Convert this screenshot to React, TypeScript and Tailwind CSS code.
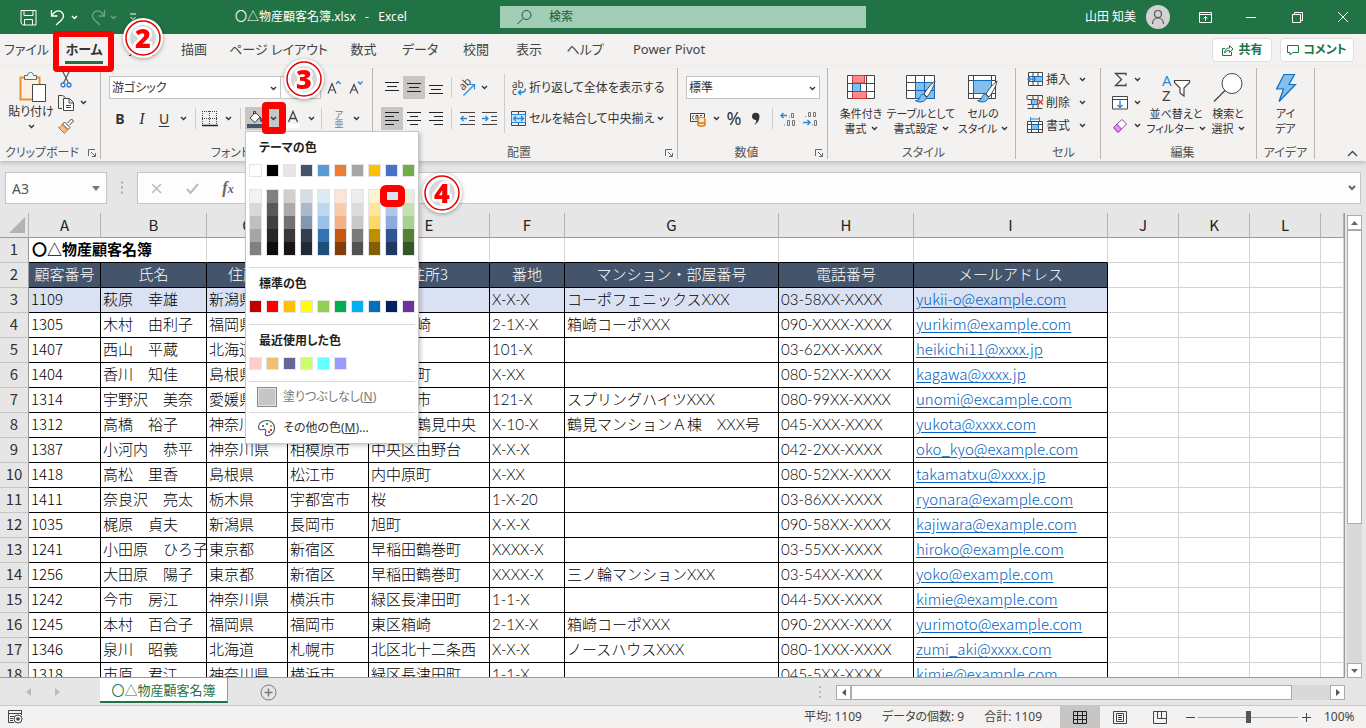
import type { ReactNode } from "react";
import clsx from "clsx";

const UI_FONT = "font-['Noto_Sans','Noto_Sans_CJK_JP',sans-serif] [font-feature-settings:'palt']";
const CELL_FONT = "font-['Noto_Sans_CJK_JP',sans-serif] [font-feature-settings:normal]";
const CODE_FONT = "font-['Lato','Noto_Sans_CJK_JP',sans-serif]";

const tabs = [
  { label: "ファイル", width: "w-[53px]" },
  { label: "ホーム", width: "w-[62px]", active: true },
  { label: "挿入", width: "w-[52px]" },
  { label: "描画", width: "w-[54px]" },
  { label: "ページ レイアウト", width: "w-[115px]" },
  { label: "数式", width: "w-[55px]" },
  { label: "データ", width: "w-[58px]" },
  { label: "校閲", width: "w-[54px]" },
  { label: "表示", width: "w-[52px]" },
  { label: "ヘルプ", width: "w-[60px]" },
  { label: "Power Pivot", width: "w-[108px]" },
];

const columns = [
  { name: "A", width: "w-[72px]", title: "顧客番号" },
  { name: "B", width: "w-[106px]", title: "氏名" },
  { name: "C", width: "w-[81px]", title: "住所1" },
  { name: "D", width: "w-[81px]", title: "住所2" },
  { name: "E", width: "w-[121px]", title: "住所3" },
  { name: "F", width: "w-[75px]", title: "番地", font: CODE_FONT },
  { name: "G", width: "w-[214px]", title: "マンション・部屋番号", font: CODE_FONT },
  { name: "H", width: "w-[135px]", title: "電話番号", font: CODE_FONT },
  { name: "I", width: "w-[194px]", title: "メールアドレス" },
];

const emptyColumns = ["J", "K", "L", ""];

const customers = [
  ["1109", "萩原　幸雄", "新潟県", "長岡市", "旭町", "X-X-X", "コーポフェニックスXXX", "03-58XX-XXXX", "yukii-o@example.com"],
  ["1305", "木村　由利子", "福岡県", "福岡市", "東区箱崎", "2-1X-X", "箱崎コーポXXX", "090-XXXX-XXXX", "yurikim@example.com"],
  ["1407", "西山　平蔵", "北海道", "札幌市", "北区", "101-X", "", "03-62XX-XXXX", "heikichi11@xxxx.jp"],
  ["1404", "香川　知佳", "島根県", "松江市", "内中原町", "X-XX", "", "080-52XX-XXXX", "kagawa@xxxx.jp"],
  ["1314", "宇野沢　美奈", "愛媛県", "松山市", "道後北市", "121-X", "スプリングハイツXXX", "080-99XX-XXXX", "unomi@excample.com"],
  ["1312", "高橋　裕子", "神奈川県", "横浜市", "鶴見区鶴見中央", "X-10-X", "鶴見マンションＡ棟　XXX号", "045-XXX-XXXX", "yukota@xxxx.com"],
  ["1387", "小河内　恭平", "神奈川県", "相模原市", "中央区由野台", "X-X-X", "", "042-2XX-XXXX", "oko_kyo@example.com"],
  ["1418", "高松　里香", "島根県", "松江市", "内中原町", "X-XX", "", "080-52XX-XXXX", "takamatxu@xxxx.jp"],
  ["1411", "奈良沢　亮太", "栃木県", "宇都宮市", "桜", "1-X-20", "", "03-86XX-XXXX", "ryonara@example.com"],
  ["1035", "梶原　貞夫", "新潟県", "長岡市", "旭町", "X-X-X", "", "090-58XX-XXXX", "kajiwara@example.com"],
  ["1241", "小田原　ひろ子", "東京都", "新宿区", "早稲田鶴巻町", "XXXX-X", "", "03-55XX-XXXX", "hiroko@example.com"],
  ["1256", "大田原　陽子", "東京都", "新宿区", "早稲田鶴巻町", "XXXX-X", "三ノ輪マンションXXX", "03-54XX-XXXX", "yoko@example.com"],
  ["1242", "今市　房江", "神奈川県", "横浜市", "緑区長津田町", "1-1-X", "", "044-5XX-XXXX", "kimie@example.com"],
  ["1245", "本村　百合子", "福岡県", "福岡市", "東区箱崎", "2-1X-X", "箱崎コーポXXX", "090-2XXX-XXXX", "yurimoto@example.com"],
  ["1346", "泉川　昭義", "北海道", "札幌市", "北区北十二条西", "X-X-X", "ノースハウスXXX", "080-1XXX-XXXX", "zumi_aki@xxxx.com"],
  ["1318", "市原　君江", "神奈川県", "横浜市", "緑区長津田町", "1-1-X", "", "045-5XX-XXXX", "kimie@example.com"],
];

const themeColors = [
  ["#ffffff", "#f2f2f2", "#d9d9d9", "#bfbfbf", "#a6a6a6", "#808080"],
  ["#000000", "#808080", "#595959", "#404040", "#262626", "#0d0d0d"],
  ["#e7e6e6", "#d0cece", "#aeaaaa", "#757171", "#3a3838", "#161616"],
  ["#44546a", "#d6dce4", "#acb9ca", "#8497b0", "#333f4f", "#222b35"],
  ["#5b9bd5", "#ddebf7", "#bdd7ee", "#9bc2e6", "#2f75b5", "#1f4e78"],
  ["#ed7d31", "#fce4d6", "#f8cbad", "#f4b084", "#c65911", "#833c0c"],
  ["#a5a5a5", "#ededed", "#dbdbdb", "#c9c9c9", "#7b7b7b", "#525252"],
  ["#ffc000", "#fff2cc", "#ffe699", "#ffd966", "#bf8f00", "#806000"],
  ["#4472c4", "#d9e1f2", "#b4c6e7", "#8ea9db", "#305496", "#203764"],
  ["#70ad47", "#e2efda", "#c6e0b4", "#a9d08e", "#548235", "#375623"],
];
const standardColors = ["#c00000", "#ff0000", "#ffc000", "#ffff00", "#92d050", "#00b050", "#00b0f0", "#0070c0", "#002060", "#7030a0"];
const recentColors = ["#ffcccc", "#f0c070", "#666699", "#ccff66", "#66ffff", "#9999ff"];

type IconProps = { w?: number; h?: number; className?: string; children: ReactNode };

function Icon({ w = 16, h = 16, className, children }: IconProps) {
  return (
    <svg width={w} height={h} viewBox={`0 0 ${w} ${h}`} fill="none" stroke="#444" className={clsx("shrink-0 overflow-visible", className)} aria-hidden="true">
      {children}
    </svg>
  );
}

function Chevron({ className }: { className?: string }) {
  return (
    <Icon w={7} h={5} className={className}>
      <path d="M1 1l2.500 2.500L6 1" stroke="currentColor" strokeWidth="1.400" />
    </Icon>
  );
}

function Drop({ label, className }: { label: string; className?: string }) {
  return (
    <button type="button" aria-label={label} className={clsx("flex h-[23px] shrink-0 items-center justify-center", className ?? "w-4")}>
      <Chevron />
    </button>
  );
}

function Tool({ label, className, children }: { label: string; className?: string; children: ReactNode }) {
  return (
    <button type="button" aria-label={label} className={clsx("flex h-[23px] shrink-0 items-center justify-center", className ?? "w-[22px]")}>
      {children}
    </button>
  );
}

function Separator({ className }: { className?: string }) {
  return <div className={clsx("mx-1 w-px bg-[#d0cecc]", className ?? "h-[21px]")} />;
}

function Group({ label, launcher, className, children }: { label: string; launcher?: boolean; className: string; children: ReactNode }) {
  return (
    <section aria-label={label} className={clsx("relative my-0.5 flex shrink-0 flex-col border-r border-[#b9b7b5]", className)}>
      <div className="flex-1">{children}</div>
      <div className={clsx("text-center text-[12px] leading-3 whitespace-nowrap text-[#555]", launcher && "pr-5")}>{label}</div>
      {launcher && (
        <button type="button" aria-label={`${label}の設定`} className="absolute right-1 bottom-0.5">
          <Icon w={8} h={8}>
            <path d="M.5 7V.5H7M3 3l4 4M7.500 4v3.500H4" stroke="#666" />
          </Icon>
        </button>
      )}
    </section>
  );
}

function BigButton({ icon, lines, drop, className }: { icon: ReactNode; lines: string[]; drop?: boolean; className: string }) {
  return (
    <button type="button" className={clsx("flex shrink-0 flex-col items-center text-[11px] leading-[15px] whitespace-nowrap", className)}>
      <span className="flex h-[36px] items-center">{icon}</span>
      <span>{lines[0]}</span>
      <span className="flex items-center gap-1">
        {lines[1]}
        {drop && <Chevron />}
      </span>
    </button>
  );
}

function Lines({ rows }: { rows: [number, number, number][] }) {
  return (
    <Icon w={14} h={14}>
      {rows.map(([x1, x2, y]) => (
        <path key={y} d={`M${x1} ${y}.500H${x2}`} stroke="#222" />
      ))}
    </Icon>
  );
}

function TitleBar() {
  return (
    <header className="grid h-[34px] shrink-0 grid-cols-[500fr_366fr_500fr] items-center bg-[#217346] text-[12px] text-white">
      <div className="flex items-center">
        <button type="button" aria-label="上書き保存" className="ml-5">
          <Icon w={17} h={17}>
            <path d="M1 1.500h15v14.500H3L1 14zM4 1.500v5h9v-5M4.500 16v-5.500h8V16" stroke="#fff" />
          </Icon>
        </button>
        <button type="button" aria-label="元に戻す" className="ml-3">
          <Icon w={17} h={18}>
            <path d="M2.500 2v6h6M3 7.500C5 3.500 9 1.500 12.500 4c3 3 2.500 5.500 0 8L7 17" stroke="#fff" strokeWidth="1.300" />
          </Icon>
        </button>
        <Drop label="元に戻す履歴" />
        <button type="button" aria-label="やり直し" className="ml-2 opacity-35">
          <Icon w={17} h={18}>
            <path d="M14.500 2v6h-6M14 7.500C12 3.500 8 1.500 4.500 4c-3 3-2.500 5.500 0 8L10 17" stroke="#fff" strokeWidth="1.300" />
          </Icon>
        </button>
        <Drop label="やり直し履歴" className="w-3 opacity-35" />
        <button type="button" aria-label="クイック アクセス ツール バーのカスタマイズ" className="ml-2.5">
          <Icon w={8} h={8}>
            <path d="M1 1h6M1.500 4L4 6.500 6.500 4" stroke="#fff" />
          </Icon>
        </button>
        <h1 className="ml-[98px] whitespace-nowrap">〇△物産顧客名簿.xlsx&nbsp;&nbsp; -&nbsp;&nbsp; Excel</h1>
      </div>
      <label className="flex h-[22px] items-center bg-[#a0cdb4] pl-4 text-[#185c37]">
        <Icon w={17} h={17}>
          <circle cx="10.500" cy="6" r="4.500" stroke="#185c37" />
          <path d="M7 9.500L1.500 15" stroke="#185c37" />
        </Icon>
        <input aria-label="検索" placeholder="検索" className="ml-4 min-w-0 flex-1 bg-transparent outline-none placeholder:text-[#185c37]" />
      </label>
      <div className="flex items-center justify-end">
        <span>山田 知美</span>
        <span className="mr-3 ml-2.5 flex h-6 w-6 items-center justify-center rounded-full bg-[#d2d2d2]">
          <Icon w={14} h={16}>
            <circle cx="7" cy="5" r="3.500" stroke="#555" strokeWidth="1.200" />
            <path d="M1.500 15c0-8 11-8 11 0" stroke="#555" strokeWidth="1.200" />
          </Icon>
        </span>
        <button type="button" aria-label="リボンの表示オプション" className="flex w-[46px] justify-center">
          <Icon w={13} h={11}>
            <path d="M.5.500h12v10H.500zM.5 2.500h12M6.500 9V4.500M4.500 6.500l2-2 2 2" stroke="#fff" />
          </Icon>
        </button>
        <button type="button" aria-label="最小化" className="flex w-[46px] justify-center">
          <Icon w={10} h={10}>
            <path d="M0 5.500h10" stroke="#fff" />
          </Icon>
        </button>
        <button type="button" aria-label="元に戻す (縮小)" className="flex w-[46px] justify-center">
          <Icon w={11} h={11}>
            <path d="M.5 2.500h8v8h-8zM2.500 2.500v-2h8v8h-2" stroke="#fff" />
          </Icon>
        </button>
        <button type="button" aria-label="閉じる" className="flex w-[46px] justify-center">
          <Icon w={10} h={10}>
            <path d="M0 0l10 10M10 0L0 10" stroke="#fff" />
          </Icon>
        </button>
      </div>
    </header>
  );
}

function TabBar() {
  return (
    <nav className="flex h-8 shrink-0 items-center bg-[#f3f2f1] text-[13px] text-[#444]">
      {tabs.map(({ label, width, active }) => (
        <button key={label} type="button" className={clsx("flex h-7 shrink-0 items-center justify-center whitespace-nowrap", width)}>
          <span className={clsx("border-b-[3px] leading-6", active ? "border-[#217346] font-bold text-[#333]" : "border-transparent")}>{label}</span>
        </button>
      ))}
      <div className="ml-auto flex gap-2 pr-3 text-[12px] font-bold text-[#217346]">
        <button type="button" className="flex h-6 w-[60px] items-center justify-center gap-1 rounded-sm border border-[#e1dfdd] bg-white">
          <Icon w={13} h={13}>
            <path d="M4 4.500H1.500v7h9V8M3.500 9c.5-3.500 2-5 5-5V1.500l3.500 3.500-3.500 3.500V6.500c-2 0-3.500.5-5 2.500z" stroke="#217346" />
          </Icon>
          共有
        </button>
        <button type="button" className="flex h-6 w-[74px] items-center justify-center gap-1 rounded-sm border border-[#e1dfdd] bg-white">
          <Icon w={12} h={12}>
            <path d="M.5 1.500h11v7H6l-3 2.500V8.500H.500z" stroke="#217346" />
          </Icon>
          コメント
        </button>
      </div>
    </nav>
  );
}

function ClipboardGroup() {
  return (
    <Group label="クリップボード" launcher className="w-[101px] pl-1">
      <div className="flex">
        <button type="button" className="flex w-[54px] shrink-0 flex-col items-center pt-1 text-[12px] whitespace-nowrap">
          <Icon w={28} h={32} className="ml-1">
            <path d="M1.500 5.500h19v22h-19z" fill="#fdf1e2" stroke="#e8932f" strokeWidth="2" />
            <path d="M5.500 7.500v-4h3c0-4 6-4 6 0h3v4z" fill="#f3f2f1" stroke="#666" />
            <path d="M13.500 12.500h13v17h-13z" fill="#fff" stroke="#444" />
          </Icon>
          <span className="leading-4">貼り付け</span>
          <Chevron className="mt-1" />
        </button>
        <div className="flex flex-col">
          <Tool label="切り取り" className="w-4">
            <Icon w={14} h={17}>
              <path d="M3.500 0l6 12M10.500 0l-6 12" stroke="#555" strokeWidth="1.200" />
              <circle cx="4" cy="14" r="2" stroke="#2b7cd3" strokeWidth="1.300" />
              <circle cx="10" cy="14" r="2" stroke="#2b7cd3" strokeWidth="1.300" />
            </Icon>
          </Tool>
          <div className="flex">
            <Tool label="コピー" className="w-4">
              <Icon w={16} h={16}>
                <path d="M4 13.500H.500v-13h4l3 2" />
                <path d="M5.500 3.500h6l4 4v8h-10zM11 3.500V8h4.500M8 10.500h5M8 12.500h5" fill="#fff" />
              </Icon>
            </Tool>
            <Drop label="コピーのオプション" className="w-[18px]" />
          </div>
          <Tool label="書式のコピー/貼り付け" className="w-4">
            <Icon w={16} h={16}>
              <path d="M9.500 5l4-4 2 2-4 4" fill="#fff" />
              <path d="M6.500 4l5.500 5.500-2 2L4.500 6z" fill="#fff" />
              <path d="M4 6.500l5.500 5.500-3 3.500L.5 9.500C2 9 3.500 8 4 6.500z" fill="#f5c183" stroke="#d9730d" />
            </Icon>
          </Tool>
        </div>
      </div>
    </Group>
  );
}

function FontGroup() {
  return (
    <Group label="フォント" launcher className="w-[272px] pl-2">
      <div className="flex items-center pt-2">
        <div className="relative flex">
          <select aria-label="フォント名" className="h-[23px] w-[172px] appearance-none border border-[#c6c4c2] bg-white pl-0.5 text-[12px]">
            <option>游ゴシック</option>
          </select>
          <Chevron className="pointer-events-none absolute top-2.5 right-1" />
        </div>
        <div className="relative -ml-px flex">
          <select aria-label="フォント サイズ" className="h-[23px] w-[41px] appearance-none border border-[#c6c4c2] bg-white pl-1 text-[12px]">
            <option>11</option>
          </select>
          <Chevron className="pointer-events-none absolute top-2.5 right-1" />
        </div>
        <Tool label="フォント サイズの拡大" className="ml-0.5 w-[22px]">
          <Icon w={14} h={15}>
            <path d="M1 13.500L5 3.500l4 10M2.500 10h5" strokeWidth="1.200" />
            <path d="M9 4l2.200-2.500L13.500 4" stroke="#2b7cd3" strokeWidth="1.200" />
          </Icon>
        </Tool>
        <Tool label="フォント サイズの縮小">
          <Icon w={14} h={15}>
            <path d="M1 13.500L5 4.500l4 9M2.500 10h5" strokeWidth="1.200" />
            <path d="M9 1.500L11.200 4l2.300-2.500" stroke="#2b7cd3" strokeWidth="1.200" />
          </Icon>
        </Tool>
      </div>
      <div className="flex items-center pt-2 text-[14px]">
        <Tool label="太字">
          <b>B</b>
        </Tool>
        <Tool label="斜体">
          <i className="font-['Liberation_Serif',serif] text-[16px]">I</i>
        </Tool>
        <Tool label="下線">
          <u className="underline-offset-2">U</u>
        </Tool>
        <Drop label="下線の種類" />
        <Separator />
        <Tool label="罫線" className="w-5">
          <Icon w={16} h={16}>
            <path d="M.5 0v14M14.500 0v14M0 .500h15M7.500 0v14M0 7.500h15" strokeDasharray="1 1" />
            <path d="M0 14.500h16" stroke="#222" strokeWidth="1.500" />
          </Icon>
        </Tool>
        <Drop label="罫線の種類" />
        <Separator />
        <Tool label="塗りつぶしの色" className="w-5 bg-[#c8c6c4]">
          <Icon w={18} h={18}>
            <path d="M4 8l5.500-5.500L14 7l-5 5.500z" fill="#fff" stroke="#444" />
            <path d="M7.500 5V1.500h2V4" />
            <path d="M14 7c2 1.500 2 4 1.500 5-1.500-1-1.500-3-1.500-5z" fill="#2b579a" stroke="#2b579a" />
            <path d="M1 14h16v4H1z" fill="#44546a" stroke="none" />
          </Icon>
        </Tool>
        <Drop label="塗りつぶしの色の一覧" className="w-4 bg-[#c8c6c4]" />
        <Tool label="フォントの色" className="w-6">
          <Icon w={16} h={18}>
            <path d="M3.500 12L8 1.500 12.500 12M5 8.500h6" strokeWidth="1.300" />
            <path d="M1 14h14v4H1z" fill="#fff" stroke="none" />
          </Icon>
        </Tool>
        <Drop label="フォントの色の一覧" className="w-3" />
        <Separator />
        <Tool label="ふりがなの表示/非表示" className="w-[26px] flex-col text-[9px] leading-[9px] text-[#777]">
          <span>ア</span>
          <span>亜</span>
        </Tool>
        <Drop label="ふりがなのオプション" className="w-2" />
      </div>
    </Group>
  );
}

function AlignmentGroup() {
  return (
    <Group label="配置" launcher className="w-[305px] pl-2">
      <div className="flex">
        <div className="flex flex-col gap-2 pt-2">
          <div className="flex items-center">
            <Tool label="上揃え">
              <Lines rows={[[0, 14, 1], [2, 12, 5], [0, 14, 9]]} />
            </Tool>
            <Tool label="上下中央揃え" className="w-[22px] bg-[#c8c6c4]">
              <Lines rows={[[0, 14, 2], [2, 12, 6], [0, 14, 10]]} />
            </Tool>
            <Tool label="下揃え">
              <Lines rows={[[0, 14, 4], [2, 12, 8], [0, 14, 12]]} />
            </Tool>
            <Separator />
            <Tool label="方向">
              <Icon w={18} h={18}>
                <path d="M5.500 16.500L16 6M11.500 5.500h5v5" stroke="#2b88d8" strokeWidth="1.200" />
                <text x="5" y="12" fontSize="11" fill="#444" stroke="none" transform="rotate(-45 5 12)">
                  ab
                </text>
              </Icon>
            </Tool>
            <Drop label="方向の一覧" className="w-3" />
          </div>
          <div className="flex items-center">
            <Tool label="左揃え" className="w-[22px] bg-[#c8c6c4]">
              <Lines rows={[[0, 14, 0], [0, 9, 4], [0, 14, 8], [0, 9, 12]]} />
            </Tool>
            <Tool label="中央揃え">
              <Lines rows={[[0, 14, 0], [3, 11, 4], [0, 14, 8], [3, 11, 12]]} />
            </Tool>
            <Tool label="右揃え">
              <Lines rows={[[0, 14, 0], [5, 14, 4], [0, 14, 8], [5, 14, 12]]} />
            </Tool>
            <Separator />
            <Tool label="インデントを減らす">
              <Icon w={15} h={13}>
                <path d="M0 .500h15M9 4.500h6M9 8.500h6M0 12.500h15" />
                <path d="M7 6.500H1M3.500 4L1 6.500 3.500 9" stroke="#2b88d8" strokeWidth="1.300" />
              </Icon>
            </Tool>
            <Tool label="インデントを増やす">
              <Icon w={15} h={13}>
                <path d="M0 .500h15M9 4.500h6M9 8.500h6M0 12.500h15" />
                <path d="M0 6.500h6M3.500 4L6 6.500 3.500 9" stroke="#2b88d8" strokeWidth="1.300" />
              </Icon>
            </Tool>
          </div>
        </div>
        <Separator className="mt-1.5 h-[59px]" />
        <div className="flex flex-col gap-2 pt-2 pl-0.5 text-[12px] whitespace-nowrap">
          <button type="button" className="flex h-[23px] items-center gap-0.5">
            <Icon w={16} h={18}>
              <text x="1" y="9" fontSize="10" fill="#444" stroke="none">ab</text>
              <text x="1" y="16" fontSize="10" fill="#444" stroke="none">c</text>
              <path d="M14.500 9.500c0 4-2 4-7 4M10 11l-2.500 2.500L10 16" stroke="#2b88d8" strokeWidth="1.500" />
            </Icon>
            折り返して全体を表示する
          </button>
          <div className="flex items-center">
            <button type="button" className="flex h-[23px] items-center gap-0.5">
              <Icon w={16} h={16}>
                <path d="M.5.500h14v14H.500zM.5 3.500h14M.500 11.500h14M7.500.500v3M7.500 11.500v3" />
                <path d="M.5 3.500h14v8H.500z" fill="#cfe4f7" stroke="#2b88d8" />
                <path d="M2.500 7.500h10M5 5L2.500 7.500 5 10M10 5l2.500 2.500L10 10" stroke="#2b88d8" strokeWidth="1.300" />
              </Icon>
              セルを結合して中央揃え
            </button>
            <Drop label="セル結合のオプション" className="w-3" />
          </div>
        </div>
      </div>
    </Group>
  );
}

function NumberGroup() {
  return (
    <Group label="数値" launcher className="w-[150px] pl-2">
      <div className="relative mt-2 flex w-[134px]">
        <select aria-label="表示形式" className="h-[23px] w-full appearance-none border border-[#c6c4c2] bg-white pl-0.5 text-[12px]">
          <option>標準</option>
        </select>
        <Chevron className="pointer-events-none absolute top-2.5 right-1" />
      </div>
      <div className="flex items-center pt-2">
        <Tool label="通貨表示形式">
          <Icon w={17} h={16}>
            <path d="M9 10.500H1.500v-8h14v4M5 4.500c-2 0-2 4 0 4M7 8.500v-4h2v4M11 4.500h2M11 6.500h1" />
            <ellipse cx="12.500" cy="8" rx="3.500" ry="1.500" fill="#fff" stroke="#d9730d" />
            <path d="M9 8v6c0 1.500 7 1.500 7 0V8M9 11c0 1.500 7 1.500 7 0" fill="#fbe3c8" stroke="#d9730d" strokeWidth="1.300" />
          </Icon>
        </Tool>
        <Drop label="通貨の一覧" />
        <Tool label="パーセント スタイル" className="w-5 text-[18px]">
          %
        </Tool>
        <Tool label="桁区切りスタイル" className="w-6">
          <Icon w={10} h={14}>
            <path d="M1 4.500a3.500 3.500 0 1 1 7.500 0c0 4-2 7-5.500 8.500C5 11 5.500 9.500 5 8 2.500 8 1 6.500 1 4.500z" fill="#333" stroke="none" />
          </Icon>
        </Tool>
        <Separator />
        <Tool label="小数点以下の表示桁数を増やす">
          <Icon w={16} h={16}>
            <path d="M7 4.500H1M3.500 2L1 4.500 3.500 7" stroke="#2b88d8" strokeWidth="1.400" />
            <path d="M11.500 2.500h2v4h-2zM7.500 9.500h2v5h-2zM12.500 9.500h2v5h-2zM4 14h1M9 6h1" stroke="#777" />
          </Icon>
        </Tool>
        <Tool label="小数点以下の表示桁数を減らす">
          <Icon w={16} h={16}>
            <path d="M1 11.500h7M5.500 9L8 11.500 5.500 14" stroke="#2b88d8" strokeWidth="1.400" />
            <path d="M6.500 1.500h2v4h-2zM11.500 1.500h2v4h-2zM3 5.500h1M12.500 9.500h2v5h-2zM10 14h1" stroke="#777" />
          </Icon>
        </Tool>
      </div>
    </Group>
  );
}

function Brush() {
  return (
    <>
      <path d="M29 8c-3 2-8 8-11 13l3 3c3-4 7-10 8-16z" fill="#fff" stroke="#444" />
      <path d="M17.500 21c-3 0-3 2-4 4.500-.5 1.500-2 2-4 2 3 2.500 10 2 11-3z" fill="#83beec" stroke="#0f6cbd" />
    </>
  );
}

function StyleGroup() {
  return (
    <Group label="スタイル" className="w-[188px] pl-1">
      <div className="flex pt-0.5">
        <BigButton
          className="w-[58px]"
          lines={["条件付き", "書式"]}
          drop
          icon={
            <Icon w={28} h={26}>
              <path d="M.5.500h27v23H.500zM.5 8.500h27M.500 16.500h27M5.500.500v23M19.500.500v23" fill="#fff" />
              <path d="M5.500.500h12v7.500h-12zM5.500 16.500h14v7h-14z" fill="#ff8a8a" stroke="#d13438" />
              <path d="M5.500 8.500h8v8h-8z" fill="#83beec" stroke="#0f6cbd" />
            </Icon>
          }
        />
        <BigButton
          className="w-[62px]"
          lines={["テーブルとして", "書式設定"]}
          drop
          icon={
            <Icon w={30} h={30}>
              <path d="M.5 2.500h28v23H.500zM.5 9.500h28M.500 17.500h28M9.500 2.500v23M18.500 2.500v23" fill="#fff" />
              <path d="M9.500 9.500h19v16h-19zM9.500 17.500h19M18.500 9.500v16" fill="#83beec" stroke="#0f6cbd" />
              <Brush />
            </Icon>
          }
        />
        <BigButton
          className="w-[62px]"
          lines={["セルの", "スタイル"]}
          drop
          icon={
            <Icon w={30} h={30}>
              <path d="M.5 2.500h27v23H.500zM.5 7.500h27M.500 20.500h27M5.500 2.500v23M23.500 2.500v23" fill="#fff" />
              <path d="M5.500 7.500h18v13h-18z" fill="#83beec" stroke="#0f6cbd" />
              <Brush />
            </Icon>
          }
        />
      </div>
    </Group>
  );
}

function CellRow({ label, icon }: { label: string; icon: ReactNode }) {
  return (
    <div className="flex items-center">
      <button type="button" className="flex h-[23px] items-center gap-0.5">
        {icon}
        {label}
      </button>
      <Drop label={`${label}のオプション`} className="ml-1 w-4" />
    </div>
  );
}

function CellsGroup() {
  return (
    <Group label="セル" className="w-[85px] pl-[11px]">
      <div className="text-[12px]">
        <CellRow
          label="挿入"
          icon={
            <Icon w={17} h={15}>
              <path d="M1.500.500h14v13h-14zM1.500 4.500h14M1.500 9.500h14M6 .500v13M11 .500v13" fill="#fff" />
              <path d="M7.500 4.500h8v5h-8z" fill="#83beec" stroke="#0f6cbd" />
              <path d="M9 7H1M4 4L1 7l3 3" stroke="#2b88d8" strokeWidth="1.500" />
            </Icon>
          }
        />
        <CellRow
          label="削除"
          icon={
            <Icon w={17} h={15}>
              <path d="M.5.500h15M.500 13.500h15M.500 4.500h4v5h-4M6 .500v4M11 .500v4M6 9.500v4M11 9.500v4M0 .500v4M15.500.500v3" />
              <path d="M4.500 4.500h6v5h-6z" fill="#83beec" stroke="#0f6cbd" />
              <path d="M11 4.500l5 5M16 4.500l-5 5" stroke="#e03c31" strokeWidth="1.500" />
            </Icon>
          }
        />
        <CellRow
          label="書式"
          icon={
            <Icon w={17} h={17}>
              <path d="M.5 4.500h15v11H.500zM.5 7.500h15M.500 12.500h15M4.500 4.500v11M11.500 4.500v11" fill="#fff" />
              <path d="M4.500 7.500h7v5h-7z" fill="#83beec" stroke="#0f6cbd" />
              <path d="M3.500 0v4M12.500 0v4M4 2h8" stroke="#2b88d8" />
            </Icon>
          }
        />
      </div>
    </Group>
  );
}

function EditingGroup() {
  return (
    <Group label="編集" className="w-[156px] pl-2">
      <div className="flex">
        <div className="flex flex-col">
          <div className="flex items-center">
            <Tool label="オート SUM">
              <Icon w={13} h={15}>
                <path d="M12 3.500v-2H1.500l6 6-6 6H12v-2" strokeWidth="1.300" />
              </Icon>
            </Tool>
            <Drop label="オート SUM の一覧" className="w-3" />
          </div>
          <div className="flex items-center">
            <Tool label="フィル">
              <Icon w={16} h={14}>
                <path d="M.5.500h15v12.500H.500zM.5 3.500h15" fill="#fff" />
                <path d="M8 4.500v7M5.500 9L8 11.500 10.500 9" stroke="#2b88d8" strokeWidth="1.400" />
              </Icon>
            </Tool>
            <Drop label="フィルの一覧" className="w-3" />
          </div>
          <div className="flex items-center">
            <Tool label="クリア">
              <Icon w={16} h={16}>
                <path d="M1.500 9.500L10 1.500l4.500 4.500L6 14.500z" fill="#fff" stroke="#a33fb0" />
                <path d="M1.500 9.500L5 6l4.500 5L6 14.500z" fill="#d59ade" stroke="#a33fb0" />
              </Icon>
            </Tool>
            <Drop label="クリアの一覧" className="w-3" />
          </div>
        </div>
        <div className="flex pt-0.5">
          <BigButton
            className="w-[66px]"
            lines={["並べ替えと", "フィルター"]}
            drop
            icon={
              <Icon w={30} h={32}>
                <text x="1" y="14" fontSize="15" fill="#2b88d8" stroke="none">A</text>
                <text x="1" y="29" fontSize="15" fill="#444" stroke="none">Z</text>
                <path d="M13.500 8.500h15v2L23 16v8l-4-3v-5l-5.500-5.500z" fill="#fff" strokeWidth="1.200" />
              </Icon>
            }
          />
          <BigButton
            className="w-[38px]"
            lines={["検索と", "選択"]}
            drop
            icon={
              <Icon w={30} h={30}>
                <circle cx="19" cy="10.500" r="10" fill="#fff" />
                <path d="M12 17.500L1 28.500" strokeWidth="1.300" />
              </Icon>
            }
          />
        </div>
      </div>
    </Group>
  );
}

function Ribbon() {
  return (
    <div className="relative z-10 flex h-[95px] shrink-0 bg-[#f3f2f1] text-[#333] shadow-[0_2px_4px_rgba(0,0,0,0.18)]">
      <ClipboardGroup />
      <FontGroup />
      <AlignmentGroup />
      <NumberGroup />
      <StyleGroup />
      <CellsGroup />
      <EditingGroup />
      <Group label="アイデア" className="w-[58px]">
        <div className="flex justify-center pt-0.5">
          <BigButton
            className="w-14"
            lines={["アイ", "デア"]}
            icon={
              <Icon w={22} h={30}>
                <path d="M9 1.500h10.500L14 11.500h6.500L4 28.500l4.500-12.500H1.500z" fill="#83beec" stroke="#0f6cbd" strokeWidth="1.200" />
              </Icon>
            }
          />
        </div>
      </Group>
      <button type="button" aria-label="リボンを折りたたむ" className="mt-auto mr-2 mb-1 ml-auto">
        <Icon w={11} h={7}>
          <path d="M1 6l4.500-4.500L10 6" strokeWidth="1.300" />
        </Icon>
      </button>
    </div>
  );
}

function FormulaBar() {
  return (
    <div className="flex shrink-0 items-center pt-[11px] pr-[5px] pb-[9px] pl-[5px]">
      <div className="flex h-8 w-[102px] items-center border border-[#c6c6c6] bg-[#fdfdfd] pr-1.5 pl-1.5">
        <input aria-label="名前ボックス" defaultValue="A3" className="w-0 min-w-0 flex-1 bg-transparent text-[14px] text-[#555] outline-none" />
        <button type="button" aria-label="名前の一覧">
          <Icon w={8} h={5}>
            <path d="M0 0h8L4 5z" fill="#777" stroke="none" />
          </Icon>
        </button>
      </div>
      <Icon w={30} h={14}>
        <path d="M14 1.500h2M14 6.500h2M14 11.500h2" stroke="#aaa" strokeWidth="2" />
      </Icon>
      <div className="flex h-8 flex-1 items-center border border-[#c6c6c6] bg-[#fdfdfd]">
        <button type="button" aria-label="キャンセル" className="flex w-9 justify-center">
          <Icon w={11} h={11}>
            <path d="M1 1l9 9M10 1l-9 9" stroke="#bbb" strokeWidth="1.500" />
          </Icon>
        </button>
        <button type="button" aria-label="入力" className="flex w-9 justify-center">
          <Icon w={13} h={11}>
            <path d="M1 6l3.500 4L12 1" stroke="#bbb" strokeWidth="2" />
          </Icon>
        </button>
        <button type="button" aria-label="関数の挿入" className="w-9 font-['Liberation_Serif',serif] text-[16px] font-bold text-[#666] italic">
          f<span className="text-[12px]">x</span>
        </button>
        <input aria-label="数式バー" defaultValue="1109" className="ml-3 min-w-0 flex-1 bg-transparent text-[14px] outline-none" />
        <button type="button" aria-label="数式バーの展開" className="mr-1">
          <Icon w={8} h={6}>
            <path d="M1 1l3 3 3-3" stroke="#666" strokeWidth="2" />
          </Icon>
        </button>
      </div>
    </div>
  );
}

function Sheet() {
  const head = "h-[25px] border-r border-b border-[#b5b5b5] border-b-[#9b9b9b] p-0 font-normal";
  const rowHead = "h-[25px] border-r border-b border-r-[#9b9b9b] border-b-[#c4c4c4] bg-[#e6e6e6] p-0 pb-0.5 text-center font-normal text-[#333]";
  const blank = "border-r border-b border-[#d4d4d4] bg-white p-0";
  return (
    <div className="flex min-h-0 flex-1">
      <div className="min-w-0 flex-1 overflow-hidden border-r border-b border-[#9b9b9b]">
        <table className={clsx("w-full table-fixed border-separate border-spacing-0 text-[15px] leading-[22px]", CELL_FONT)}>
          <colgroup>
            <col className="w-[29px]" />
            {columns.map(({ name, width }) => (
              <col key={name} className={width} />
            ))}
            <col className="w-[71px]" />
            <col className="w-[71px]" />
            <col className="w-[71px]" />
            <col />
          </colgroup>
          <thead>
            <tr className="text-[#222]">
              <th className={head}>
                <Icon w={26} h={18}>
                  <path d="M25 1v16H9z" fill="#b2b2b2" stroke="none" />
                </Icon>
              </th>
              {columns.map(({ name }) => (
                <th key={name} scope="col" className={head}>
                  {name}
                </th>
              ))}
              {emptyColumns.map((name) => (
                <th key={name} scope="col" className={head}>
                  {name}
                </th>
              ))}
            </tr>
          </thead>
          <tbody>
            <tr>
              <th scope="row" className={rowHead}>1</th>
              <td colSpan={2} className="border-r border-b border-r-[#d4d4d4] border-b-black bg-white p-0 pb-0.5 pl-[3px] font-bold">
                〇△物産顧客名簿
              </td>
              {columns.slice(2).map(({ name }) => (
                <td key={name} className="border-r border-b border-r-[#d4d4d4] border-b-black bg-white p-0" />
              ))}
              {emptyColumns.map((name) => (
                <td key={name} className={blank} />
              ))}
            </tr>
            <tr>
              <th scope="row" className={rowHead}>2</th>
              {columns.map(({ name, title }) => (
                <td key={name} className="border-r border-b border-black bg-[#44546a] p-0 pb-0.5 text-center font-light whitespace-nowrap text-white">
                  {title}
                </td>
              ))}
              {emptyColumns.map((name) => (
                <td key={name} className={blank} />
              ))}
            </tr>
            {customers.map((customer, index) => (
              <tr key={customer[0]}>
                <th scope="row" className={rowHead}>{index + 3}</th>
                {customer.map((value, column) => (
                  <td
                    key={columns[column].name}
                    className={clsx(
                      "border-r border-b border-black p-0 pb-0.5 pl-0.5 font-light whitespace-nowrap",
                      columns[column].font,
                      index === 0 ? "bg-[#d9e1f2]" : "bg-white",
                    )}
                  >
                    {column === 8 ? (
                      <a href={`mailto:${value}`} className="text-[#0563c1] underline underline-offset-2">
                        {value}
                      </a>
                    ) : (
                      value
                    )}
                  </td>
                ))}
                {emptyColumns.map((name) => (
                  <td key={name} className={blank} />
                ))}
              </tr>
            ))}
          </tbody>
        </table>
      </div>
      <div className="flex w-[21px] flex-col items-center pt-0.5 pr-0.5">
        <button type="button" aria-label="上へスクロール" className="flex h-[15px] w-[15px] items-center justify-center border border-[#ababab] bg-white">
          <Icon w={7} h={4}>
            <path d="M0 4l3.500-4L7 4z" fill="#666" stroke="none" />
          </Icon>
        </button>
        <div className="flex w-[15px] flex-1 flex-col bg-[#d9d9d9]">
          <div className="h-[68%] border border-[#ababab] bg-white" />
        </div>
        <button type="button" aria-label="下へスクロール" className="flex h-[15px] w-[15px] items-center justify-center border border-[#ababab] bg-white">
          <Icon w={7} h={4}>
            <path d="M0 0l3.500 4L7 0z" fill="#666" stroke="none" />
          </Icon>
        </button>
      </div>
    </div>
  );
}

function SheetTabs() {
  return (
    <div className="flex h-7 shrink-0 items-start border-b border-[#c8c8c8]">
      <div className="flex h-7 w-[100px] items-center gap-6 pl-[26px]">
        <button type="button" aria-label="前のシート">
          <Icon w={5} h={8}>
            <path d="M5 0v8L0 4z" fill="#bbb" stroke="none" />
          </Icon>
        </button>
        <button type="button" aria-label="次のシート">
          <Icon w={5} h={8}>
            <path d="M0 0v8l5-4z" fill="#bbb" stroke="none" />
          </Icon>
        </button>
      </div>
      <button
        type="button"
        className={clsx("h-[25px] w-32 border-r border-b-2 border-r-[#9b9b9b] border-b-[#217346] bg-white text-[13px] leading-[22px] text-[#217346]", CELL_FONT)}
      >
        〇△物産顧客名簿
      </button>
      <button type="button" aria-label="新しいシート" className="mt-1.5 ml-8">
        <Icon w={17} h={17}>
          <circle cx="8.500" cy="8.500" r="7.500" stroke="#777" />
          <path d="M8.500 4.500v8M4.500 8.500h8" stroke="#777" strokeWidth="1.500" />
        </Icon>
      </button>
      <div className="mr-[21px] ml-auto flex h-7 w-[528px] items-center">
        <Icon w={19} h={12}>
          <path d="M2 1h2M2 6h2M2 11h2" stroke="#aaa" strokeWidth="1.500" />
        </Icon>
        <button type="button" aria-label="左へスクロール" className="flex h-[15px] w-[15px] items-center justify-center border border-[#ababab] bg-white">
          <Icon w={4} h={7}>
            <path d="M4 0v7L0 3.500z" fill="#555" stroke="none" />
          </Icon>
        </button>
        <div className="h-[15px] flex-1 bg-[#d9d9d9]">
          <div className="h-full w-[92%] border border-[#ababab] bg-white" />
        </div>
        <button type="button" aria-label="右へスクロール" className="flex h-[15px] w-[15px] items-center justify-center border border-[#ababab] bg-white">
          <Icon w={4} h={7}>
            <path d="M0 0v7l4-3.500z" fill="#555" stroke="none" />
          </Icon>
        </button>
      </div>
    </div>
  );
}

function StatusBar() {
  return (
    <footer className="flex h-[22px] shrink-0 items-center bg-[#f3f2f1] text-[12px] text-[#444]">
      <button type="button" aria-label="マクロの記録" className="ml-2">
        <Icon w={15} h={14}>
          <path d="M6 12.500H.500V.500h13V5M.5 3.500h13M2 6.500h4M2 8.500h3M2 10.500h3" />
          <circle cx="10" cy="9" r="4" fill="#f3f2f1" />
          <circle cx="10" cy="9" r="1.800" fill="#444" stroke="none" />
        </Icon>
      </button>
      <div className="ml-auto flex gap-5 whitespace-nowrap">
        <span>平均: 1109</span>
        <span>データの個数: 9</span>
        <span>合計: 1109</span>
      </div>
      <div className="ml-[18px] flex h-full">
        <button type="button" aria-label="標準" className="flex w-10 items-center justify-center bg-[#c8c6c4]">
          <Icon w={14} h={13}>
            <path d="M.5.500h13v12H.500zM.5 4.500h13M.500 8.500h13M4.500.500v12M9.500.500v12" stroke="#222" />
          </Icon>
        </button>
        <button type="button" aria-label="ページ レイアウト" className="flex w-10 items-center justify-center">
          <Icon w={14} h={13}>
            <path d="M.5.500h13v12H.500zM3.500 2.500h7v8h-7zM5 4.500h4M5 6.500h4M5 8.500h4" />
          </Icon>
        </button>
        <button type="button" aria-label="改ページ プレビュー" className="flex w-10 items-center justify-center">
          <Icon w={14} h={13}>
            <path d="M.5.500h13v12H.500zM4.500.500v7h9M8.500.500v7" />
          </Icon>
        </button>
      </div>
      <button type="button" aria-label="縮小" className="ml-0.5 flex w-4 justify-center">
        <Icon w={9} h={9}>
          <path d="M0 4.500h9" />
        </Icon>
      </button>
      <input
        type="range"
        aria-label="ズーム"
        min={0}
        max={200}
        defaultValue={100}
        className="h-3 w-[100px] appearance-none bg-[linear-gradient(#a8a6a4,#a8a6a4)] bg-[length:100%_1px] bg-center bg-no-repeat [&::-webkit-slider-thumb]:h-3 [&::-webkit-slider-thumb]:w-[5px] [&::-webkit-slider-thumb]:appearance-none [&::-webkit-slider-thumb]:bg-[#555]"
      />
      <button type="button" aria-label="拡大" className="flex w-4 justify-center">
        <Icon w={9} h={9}>
          <path d="M0 4.500h9M4.500 0v9" />
        </Icon>
      </button>
      <span className="ml-2.5 w-[42px]">100%</span>
    </footer>
  );
}

function Swatch({ color }: { color: string }) {
  return <button type="button" aria-label={color} className="h-[13px] w-[13px] border border-[#e2e4e7]" style={{ backgroundColor: color }} />;
}

function FillMenu() {
  const title = "pt-2 pl-2.5 text-[12px] leading-4 font-bold text-[#222]";
  const row = "flex gap-1";
  const rule = "mt-[11px] border-[#d8d8d8]";
  return (
    <div className="absolute top-[131px] left-[245px] z-20 w-[174px] border border-[#c6c6c6] bg-white px-[3px] shadow-[2px_2px_4px_rgba(0,0,0,0.2)]">
      <h2 className={title}>テーマの色</h2>
      <div className={clsx(row, "mt-2")}>
        {themeColors.map(([base]) => (
          <Swatch key={base} color={base} />
        ))}
      </div>
      <div className={clsx(row, "mt-3")}>
        {themeColors.map(([base, ...shades]) => (
          <div key={base} className="flex flex-col border border-[#e2e4e7]">
            {shades.map((shade) => (
              <button key={shade} type="button" aria-label={shade} className="h-[13px] w-[11px]" style={{ backgroundColor: shade }} />
            ))}
          </div>
        ))}
      </div>
      <hr className={rule} />
      <h2 className={title}>標準の色</h2>
      <div className={clsx(row, "mt-2")}>
        {standardColors.map((color) => (
          <Swatch key={color} color={color} />
        ))}
      </div>
      <hr className={rule} />
      <h2 className={title}>最近使用した色</h2>
      <div className={clsx(row, "mt-2")}>
        {recentColors.map((color) => (
          <Swatch key={color} color={color} />
        ))}
      </div>
      <hr className={rule} />
      <button type="button" className="flex h-[30px] w-full items-center gap-1.5 pl-2 text-[12px] text-[#777]">
        <span className="h-5 w-5 border border-[#888] bg-[#c6c6c6] ring-1 ring-[#e2e2e2] ring-inset" />
        <span>
          塗りつぶしなし(<u>N</u>)
        </span>
      </button>
      <hr className="border-[#d8d8d8]" />
      <button type="button" className="flex h-[30px] w-full items-center gap-1.5 pl-2 text-[12px] text-[#333]">
        <Icon w={20} h={18}>
          <path d="M10 1.500C4 1.500 1.500 5 1.500 8c0 3 3 3 5 2.500S9.500 12 8.500 14s1 3 3 2.500c4-1 6-4 6-7.500 0-4.500-3.500-7.500-7.500-7.500z" stroke="#555" strokeWidth="1.200" />
          <path d="M5 6h2v2H5z" fill="#2b7cd3" stroke="none" />
          <path d="M9 4h2v2H9z" fill="#3a9d5d" stroke="none" />
          <path d="M13 6h2v2h-2z" fill="#e8932f" stroke="none" />
          <path d="M13 10h2v2h-2z" fill="#d13438" stroke="none" />
          <path d="M11 12h2v2h-2z" fill="#a33fb0" stroke="none" />
        </Icon>
        <span>
          その他の色(<u>M</u>)...
        </span>
      </button>
    </div>
  );
}

function StepBadge({ step, className }: { step: number; className: string }) {
  return (
    <svg width="42" height="42" viewBox="0 0 42 42" className={clsx("absolute z-30 drop-shadow-[0_1px_2px_rgba(0,0,0,0.35)]", className)}>
      <circle cx="21" cy="21" r="20" fill="#fff" />
      <circle cx="21" cy="21" r="13" fill="#d6d6d6" />
      <circle cx="21" cy="21" r="17" fill="none" stroke="#e60000" strokeWidth="1.500" />
      <text x="21" y="31" textAnchor="middle" fontSize="27" fontWeight="900" fill="#f00" stroke="#fff" strokeWidth="5" strokeLinejoin="round" paintOrder="stroke">
        {step}
      </text>
    </svg>
  );
}

export default function App() {
  return (
    <div className={clsx("relative flex h-screen flex-col overflow-hidden bg-[#e6e6e6]", UI_FONT)}>
      <TitleBar />
      <TabBar />
      <Ribbon />
      <FormulaBar />
      <Sheet />
      <SheetTabs />
      <StatusBar />
      <FillMenu />
      <div className="absolute top-[31px] left-[53px] z-20 h-[41px] w-[61px] rounded-sm border-[6px] border-[#f00]" />
      <div className="absolute top-[102px] left-[262px] z-20 h-8 w-6 rounded-sm border-[7px] border-[#f00]" />
      <div className="absolute top-[185px] left-[380px] z-20 h-[22px] w-[25px] rounded-md border-[7px] border-[#f00] bg-[#d9e1f2]" />
      <StepBadge step={2} className="top-[17px] left-[122px]" />
      <StepBadge step={3} className="top-[58px] left-[283px]" />
      <StepBadge step={4} className="top-[172px] left-[421px]" />
    </div>
  );
}
